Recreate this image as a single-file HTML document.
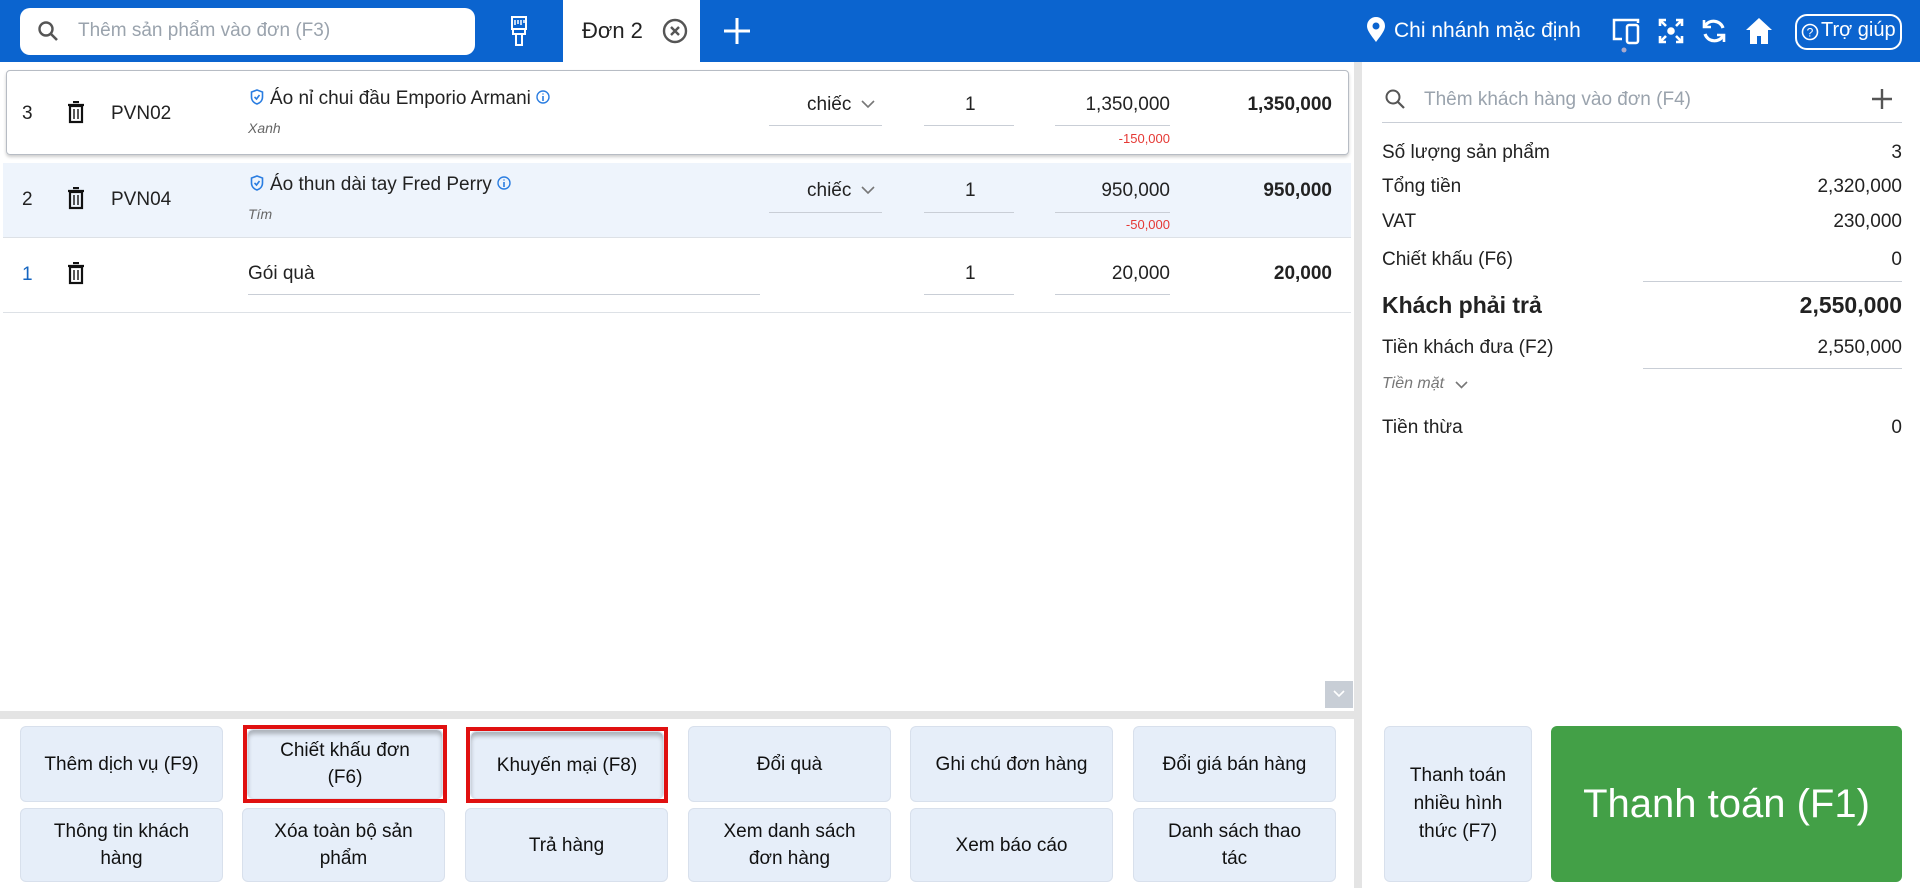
<!DOCTYPE html>
<html><head><meta charset="utf-8"><style>
*{box-sizing:border-box;margin:0;padding:0}
body{width:1920px;height:888px;overflow:hidden;background:#fff;font-family:"Liberation Sans","DejaVu Sans",sans-serif;color:#222;position:relative}
.a{position:absolute}
.top{left:0;top:0;width:1920px;height:62px;background:#0b64cf}
.srch{left:20px;top:8px;width:455px;height:47px;background:#fff;border-radius:10px}
.ph{color:#9aa3ad;font-size:19px}
.tab{left:563px;top:0;width:137px;height:62px;background:#fff}
.wt{color:#fff}
.row{font-size:19px}
.ul{border-bottom:1px solid #c9ced6}
.btn{background:#e6eef9;border:1px solid #d8e0ec;border-radius:6px;display:flex;align-items:center;justify-content:center;text-align:center;font-size:19px;line-height:27px;color:#111;width:203px}
.redb{border:4px solid #e01010}
.rl{left:1382px;font-size:19px}
.rr{right:18px;font-size:19px;text-align:right}
.ic{display:inline-block;vertical-align:middle}
</style></head><body>
<div class="a top"></div>
<div class="a srch"></div>
<svg class="a" style="left:37px;top:20px" width="22" height="22" viewBox="0 0 22 22"><circle cx="9" cy="9" r="6.5" fill="none" stroke="#555" stroke-width="2.4"/><path d="M14 14l6 6" stroke="#555" stroke-width="2.6"/></svg>
<div class="a ph" style="left:78px;top:20px">Thêm sản phẩm vào đơn (F3)</div>
<svg class="a" style="left:509px;top:15px" width="20" height="32" viewBox="0 0 20 32"><rect x="3" y="2" width="14" height="12" fill="none" stroke="#fff" stroke-width="2"/><path d="M6 5v5M9 5v4M12 5v5M15 5v3" stroke="#fff" stroke-width="1.5"/><rect x="4" y="14" width="12" height="5" fill="none" stroke="#fff" stroke-width="2"/><rect x="7" y="19" width="6" height="11" fill="none" stroke="#fff" stroke-width="2"/></svg>
<div class="a tab"></div>
<div class="a" style="left:582px;top:18px;font-size:22px;color:#222">Đơn 2</div>
<svg class="a" style="left:662px;top:18px" width="26" height="26" viewBox="0 0 26 26"><circle cx="13" cy="13" r="11" fill="none" stroke="#555" stroke-width="2.4"/><path d="M9 9l8 8M17 9l-8 8" stroke="#555" stroke-width="2.4"/></svg>
<svg class="a" style="left:723px;top:17px" width="28" height="28"><path d="M14 1v26M1 14h26" stroke="#fff" stroke-width="3"/></svg>
<svg class="a" style="left:1366px;top:17px" width="20" height="26" viewBox="0 0 20 26"><path d="M10 25C4 17 1 13 1 9a9 9 0 0 1 18 0c0 4-3 8-9 16z" fill="#fff"/><circle cx="10" cy="9" r="3.5" fill="#0b64cf"/></svg>
<div class="a wt" style="left:1394px;top:19px;font-size:21px">Chi nhánh mặc định</div>
<svg class="a" style="left:1612px;top:17px" width="30" height="36" viewBox="0 0 30 36"><path d="M10 22H2V3h24v3" fill="none" stroke="#fff" stroke-width="2.5"/><rect x="15" y="8" width="11" height="18" rx="2" fill="none" stroke="#fff" stroke-width="2.5"/><circle cx="12" cy="33" r="2.5" fill="#aac"/></svg>
<svg class="a" style="left:1658px;top:18px" width="26" height="26" viewBox="0 0 26 26" stroke="#fff" stroke-width="2.6" fill="none"><path d="M2 8V2h6M2 2l6 6M24 8V2h-6M24 2l-6 6M2 18v6h6M2 24l6-6M24 18v6h-6M24 24l-6-6"/><circle cx="13" cy="13" r="2.5" fill="#fff"/></svg>
<svg class="a" style="left:1701px;top:18px" width="26" height="26" viewBox="0 0 26 26" stroke="#fff" stroke-width="3.2" fill="none"><path d="M22 10A10 10 0 0 0 4 8M4 16a10 10 0 0 0 18 2"/><path d="M3 2v7h7M23 24v-7h-7" stroke-width="2.6"/></svg>
<svg class="a" style="left:1745px;top:16px" width="28" height="30" viewBox="0 0 28 30"><path d="M14 2L1 14h4v14h7v-8h4v8h7V14h4z" fill="#fff"/></svg>
<div class="a" style="left:1795px;top:14px;width:107px;height:36px;border:2px solid #fff;border-radius:12px"></div>
<svg class="a" style="left:1801px;top:23px" width="18" height="18" viewBox="0 0 18 18"><circle cx="9" cy="9" r="7.5" fill="none" stroke="#fff" stroke-width="1.6"/><text x="9" y="13.5" fill="#fff" font-size="12" text-anchor="middle" font-family="Liberation Sans">?</text></svg>
<div class="a wt" style="left:1821px;top:19px;font-size:20px">Trợ giúp</div>

<!-- left rows -->
<div class="a" style="left:6px;top:70px;width:1343px;height:85px;border:1px solid #b7bcc4;border-radius:4px;box-shadow:0 2px 3px rgba(0,0,0,.2)"></div>
<div class="a" style="left:3px;top:163px;width:1348px;height:75px;background:#eef4fc;border-bottom:1px solid #dde1e6"></div>
<div class="a" style="left:3px;top:312px;width:1348px;border-bottom:1px solid #dde1e6"></div>

<div class="row">
<div class="a" style="left:22px;top:103px">3</div>
<div class="a" style="left:22px;top:189px">2</div>
<div class="a" style="left:22px;top:264px;color:#1565c0">1</div>
<div class="a" style="left:111px;top:103px">PVN02</div>
<div class="a" style="left:111px;top:189px">PVN04</div>
<div class="a" style="left:250px;top:88px;white-space:nowrap"><svg class="ic" width="14" height="16" viewBox="0 0 14 16" style="margin-right:6px;margin-top:-4px"><path d="M7 1l5.5 2v5c0 3.5-2.5 6-5.5 7C4 14 1.5 11.5 1.5 8V3z" fill="none" stroke="#2a7de1" stroke-width="1.6"/><path d="M4.5 8l2 2 3-4" fill="none" stroke="#2a7de1" stroke-width="1.6"/></svg>Áo nỉ chui đầu Emporio Armani <svg class="ic" width="14" height="14" viewBox="0 0 14 14" style="margin-top:-4px"><circle cx="7" cy="7" r="6" fill="none" stroke="#2a7de1" stroke-width="1.4"/><path d="M7 6v5M7 3.5v1" stroke="#2a7de1" stroke-width="1.6"/></svg></div>
<div class="a" style="left:250px;top:174px;white-space:nowrap"><svg class="ic" width="14" height="16" viewBox="0 0 14 16" style="margin-right:6px;margin-top:-4px"><path d="M7 1l5.5 2v5c0 3.5-2.5 6-5.5 7C4 14 1.5 11.5 1.5 8V3z" fill="none" stroke="#2a7de1" stroke-width="1.6"/><path d="M4.5 8l2 2 3-4" fill="none" stroke="#2a7de1" stroke-width="1.6"/></svg>Áo thun dài tay Fred Perry <svg class="ic" width="14" height="14" viewBox="0 0 14 14" style="margin-top:-4px"><circle cx="7" cy="7" r="6" fill="none" stroke="#2a7de1" stroke-width="1.4"/><path d="M7 6v5M7 3.5v1" stroke="#2a7de1" stroke-width="1.6"/></svg></div>
<div class="a" style="left:248px;top:263px">Gói quà</div>
<div class="a ul" style="left:248px;top:294px;width:512px"></div>
<div class="a" style="left:807px;top:94px">chiếc</div>
<div class="a" style="left:807px;top:180px">chiếc</div>
<div class="a ul" style="left:769px;top:125px;width:113px"></div>
<div class="a ul" style="left:769px;top:212px;width:113px"></div>
<div class="a" style="left:965px;top:94px">1</div>
<div class="a" style="left:965px;top:180px">1</div>
<div class="a" style="left:965px;top:263px">1</div>
<div class="a ul" style="left:924px;top:125px;width:90px"></div>
<div class="a ul" style="left:924px;top:212px;width:90px"></div>
<div class="a ul" style="left:924px;top:294px;width:90px"></div>
<div class="a" style="left:1035px;width:135px;text-align:right;top:94px">1,350,000</div>
<div class="a" style="left:1035px;width:135px;text-align:right;top:180px">950,000</div>
<div class="a" style="left:1035px;width:135px;text-align:right;top:263px">20,000</div>
<div class="a ul" style="left:1055px;top:125px;width:115px"></div>
<div class="a ul" style="left:1055px;top:212px;width:115px"></div>
<div class="a ul" style="left:1055px;top:294px;width:115px"></div>
<div class="a" style="left:1055px;width:115px;text-align:right;top:131px;font-size:13px;color:#e53935">-150,000</div>
<div class="a" style="left:1055px;width:115px;text-align:right;top:217px;font-size:13px;color:#e53935">-50,000</div>
<div class="a" style="left:1150px;width:182px;text-align:right;top:94px;font-weight:bold">1,350,000</div>
<div class="a" style="left:1150px;width:182px;text-align:right;top:180px;font-weight:bold">950,000</div>
<div class="a" style="left:1150px;width:182px;text-align:right;top:263px;font-weight:bold">20,000</div>
</div>
<div class="a" style="left:248px;top:120px;font-size:14px;font-style:italic;color:#666">Xanh</div>
<div class="a" style="left:248px;top:206px;font-size:14px;font-style:italic;color:#666">Tím</div>
<svg class="a" style="left:861px;top:100px" width="14" height="9"><path d="M1 1l6 6 6-6" fill="none" stroke="#777" stroke-width="1.6"/></svg>
<svg class="a" style="left:861px;top:186px" width="14" height="9"><path d="M1 1l6 6 6-6" fill="none" stroke="#777" stroke-width="1.6"/></svg>
<svg class="a" style="left:67px;top:101px" width="18" height="23" viewBox="0 0 18 23"><path d="M6 1h6M1 4h16" stroke="#111" stroke-width="2.2"/><rect x="3" y="5" width="12" height="16" fill="none" stroke="#111" stroke-width="2.2"/><path d="M7 8v10M11 8v10" stroke="#111" stroke-width="1.4"/></svg>
<svg class="a" style="left:67px;top:187px" width="18" height="23" viewBox="0 0 18 23"><path d="M6 1h6M1 4h16" stroke="#111" stroke-width="2.2"/><rect x="3" y="5" width="12" height="16" fill="none" stroke="#111" stroke-width="2.2"/><path d="M7 8v10M11 8v10" stroke="#111" stroke-width="1.4"/></svg>
<svg class="a" style="left:67px;top:262px" width="18" height="23" viewBox="0 0 18 23"><path d="M6 1h6M1 4h16" stroke="#111" stroke-width="2.2"/><rect x="3" y="5" width="12" height="16" fill="none" stroke="#111" stroke-width="2.2"/><path d="M7 8v10M11 8v10" stroke="#111" stroke-width="1.4"/></svg>

<div class="a" style="left:1354px;top:62px;width:8px;height:826px;background:#e4e4e4"></div>
<div class="a" style="left:0;top:711px;width:1354px;height:8px;background:#e4e4e4"></div>
<div class="a" style="left:1325px;top:681px;width:28px;height:27px;background:#c8ced6"></div>
<svg class="a" style="left:1333px;top:690px" width="12" height="8"><path d="M1 1l5 5 5-5" fill="none" stroke="#fff" stroke-width="1.6"/></svg>

<div class="a btn" style="left:20px;top:726px;height:76px">Thêm dịch vụ (F9)</div>
<div class="a redb" style="left:243px;top:725px;width:204px;height:78px"></div>
<div class="a btn" style="left:247px;top:729px;height:70px;width:196px;box-shadow:inset 0 4px 4px rgba(0,0,0,.25)">Chiết khấu đơn<br>(F6)</div>
<div class="a redb" style="left:466px;top:727px;width:202px;height:76px"></div>
<div class="a btn" style="left:470px;top:731px;height:68px;width:194px;box-shadow:inset 0 4px 4px rgba(0,0,0,.25)">Khuyến mại (F8)</div>
<div class="a btn" style="left:688px;top:726px;height:76px">Đổi quà</div>
<div class="a btn" style="left:910px;top:726px;height:76px">Ghi chú đơn hàng</div>
<div class="a btn" style="left:1133px;top:726px;height:76px">Đổi giá bán hàng</div>
<div class="a btn" style="left:20px;top:808px;height:74px">Thông tin khách<br>hàng</div>
<div class="a btn" style="left:242px;top:808px;height:74px">Xóa toàn bộ sản<br>phẩm</div>
<div class="a btn" style="left:465px;top:808px;height:74px">Trả hàng</div>
<div class="a btn" style="left:688px;top:808px;height:74px">Xem danh sách<br>đơn hàng</div>
<div class="a btn" style="left:910px;top:808px;height:74px">Xem báo cáo</div>
<div class="a btn" style="left:1133px;top:808px;height:74px">Danh sách thao<br>tác</div>
<div class="a btn" style="left:1384px;top:726px;width:148px;height:156px;line-height:28px">Thanh toán<br>nhiều hình<br>thức (F7)</div>
<div class="a" style="left:1551px;top:726px;width:351px;height:156px;background:#43a047;border-radius:6px;color:#fff;font-size:40px;display:flex;align-items:center;justify-content:center">Thanh toán (F1)</div>

<svg class="a" style="left:1384px;top:88px" width="22" height="22" viewBox="0 0 22 22"><circle cx="9" cy="9" r="6.5" fill="none" stroke="#555" stroke-width="2"/><path d="M14 14l6 6" stroke="#555" stroke-width="2.2"/></svg>
<div class="a ph" style="left:1424px;top:89px">Thêm khách hàng vào đơn (F4)</div>
<svg class="a" style="left:1872px;top:89px" width="20" height="20"><path d="M10 0v20M0 10h20" stroke="#555" stroke-width="2.4"/></svg>
<div class="a" style="left:1382px;top:122px;width:520px;border-top:1px solid #c9ced6"></div>
<div class="a rl" style="top:142px">Số lượng sản phẩm</div><div class="a rr" style="top:142px">3</div>
<div class="a rl" style="top:176px">Tổng tiền</div><div class="a rr" style="top:176px">2,320,000</div>
<div class="a rl" style="top:211px">VAT</div><div class="a rr" style="top:211px">230,000</div>
<div class="a rl" style="top:249px">Chiết khấu (F6)</div><div class="a rr" style="top:249px">0</div>
<div class="a" style="left:1643px;top:281px;width:259px;border-top:1px solid #c9ced6"></div>
<div class="a rl" style="top:292px;font-size:23px;font-weight:bold">Khách phải trả</div><div class="a rr" style="top:292px;font-size:23px;font-weight:bold">2,550,000</div>
<div class="a rl" style="top:337px">Tiền khách đưa (F2)</div><div class="a rr" style="top:337px">2,550,000</div>
<div class="a" style="left:1643px;top:368px;width:259px;border-top:1px solid #c9ced6"></div>
<div class="a" style="left:1382px;top:375px;font-size:16px;font-style:italic;color:#777">Tiền mặt</div>
<svg class="a" style="left:1455px;top:381px" width="13" height="8"><path d="M1 1l5.5 5.5L12 1" fill="none" stroke="#777" stroke-width="1.6"/></svg>
<div class="a rl" style="top:417px">Tiền thừa</div><div class="a rr" style="top:417px">0</div>
</body></html>
